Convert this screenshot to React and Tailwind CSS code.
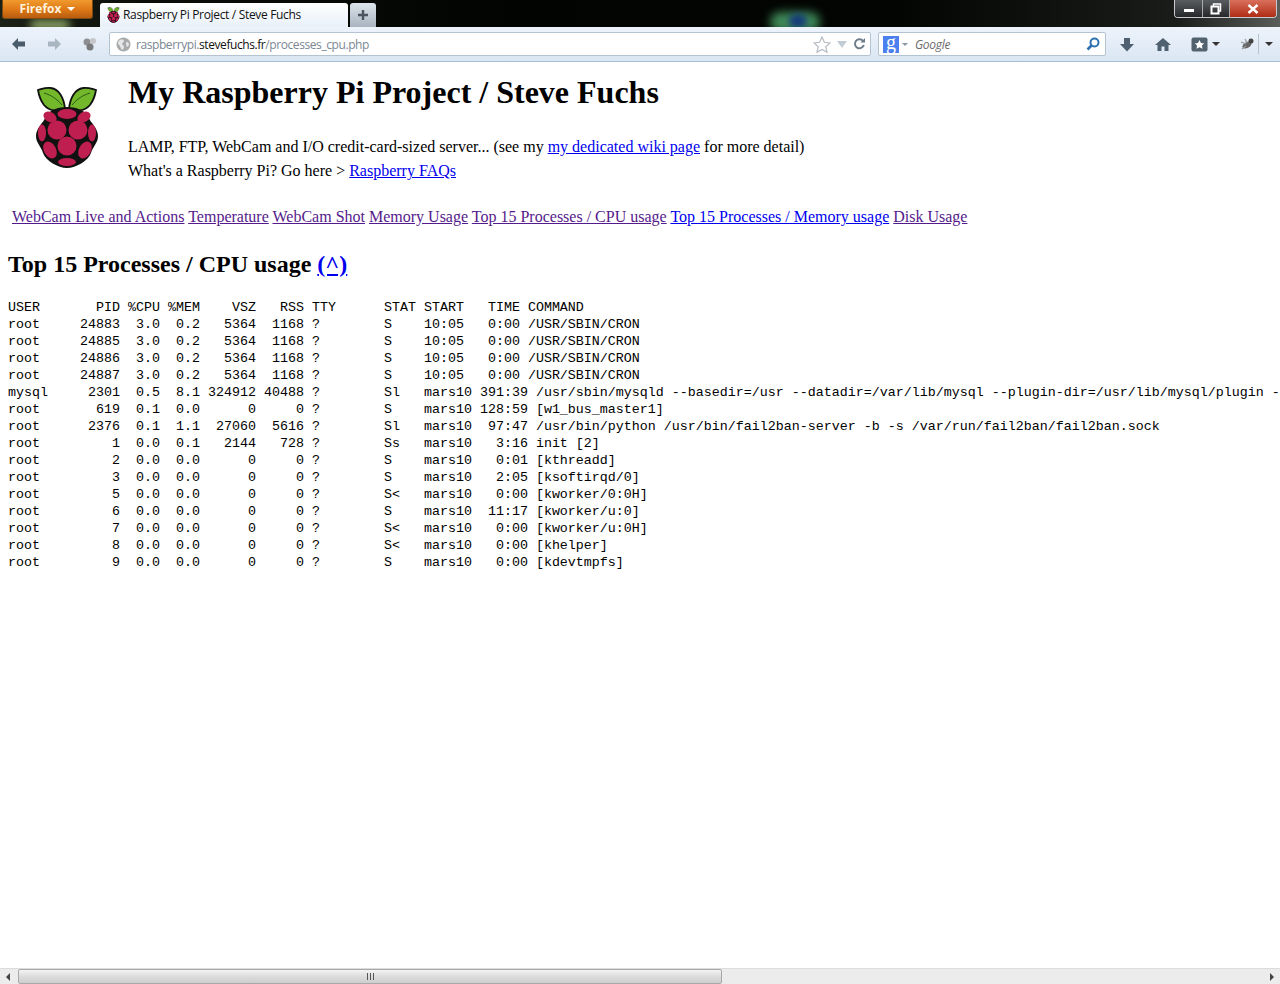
import React from 'react';

const uiFont = "font-['Open_Sans','Noto_Sans',sans-serif]";

const rows = [
  'USER       PID %CPU %MEM    VSZ   RSS TTY      STAT START   TIME COMMAND',
  'root     24883  3.0  0.2   5364  1168 ?        S    10:05   0:00 /USR/SBIN/CRON',
  'root     24885  3.0  0.2   5364  1168 ?        S    10:05   0:00 /USR/SBIN/CRON',
  'root     24886  3.0  0.2   5364  1168 ?        S    10:05   0:00 /USR/SBIN/CRON',
  'root     24887  3.0  0.2   5364  1168 ?        S    10:05   0:00 /USR/SBIN/CRON',
  'mysql     2301  0.5  8.1 324912 40488 ?        Sl   mars10 391:39 /usr/sbin/mysqld --basedir=/usr --datadir=/var/lib/mysql --plugin-dir=/usr/lib/mysql/plugin -',
  'root       619  0.1  0.0      0     0 ?        S    mars10 128:59 [w1_bus_master1]',
  'root      2376  0.1  1.1  27060  5616 ?        Sl   mars10  97:47 /usr/bin/python /usr/bin/fail2ban-server -b -s /var/run/fail2ban/fail2ban.sock',
  'root         1  0.0  0.1   2144   728 ?        Ss   mars10   3:16 init [2]',
  'root         2  0.0  0.0      0     0 ?        S    mars10   0:01 [kthreadd]',
  'root         3  0.0  0.0      0     0 ?        S    mars10   2:05 [ksoftirqd/0]',
  'root         5  0.0  0.0      0     0 ?        S<   mars10   0:00 [kworker/0:0H]',
  'root         6  0.0  0.0      0     0 ?        S    mars10  11:17 [kworker/u:0]',
  'root         7  0.0  0.0      0     0 ?        S<   mars10   0:00 [kworker/u:0H]',
  'root         8  0.0  0.0      0     0 ?        S<   mars10   0:00 [khelper]',
  'root         9  0.0  0.0      0     0 ?        S    mars10   0:00 [kdevtmpfs]',
];

const navLinks = [
  ['WebCam Live and Actions', true],
  ['Temperature', true],
  ['WebCam Shot', true],
  ['Memory Usage', true],
  ['Top 15 Processes / CPU usage', true],
  ['Top 15 Processes / Memory usage', false],
  ['Disk Usage', true],
];

const Raspberry = ({ className }) => (
  <svg viewBox="0 0 64 82" className={className}>
    <path d="M30 23C29 12 24 3 16 2 11 1 7 3 3 4c1 6 3 11 6 15 5 6 14 7 21 4z" fill="#72b82a" stroke="#111" strokeWidth="1.800" />
    <path d="M34 23C35 12 40 3 48 2c5-1 9 1 13 2-1 6-3 11-6 15-5 6-14 7-21 4z" fill="#72b82a" stroke="#111" strokeWidth="1.800" />
    <path d="M9 7c7 2 13 6 18 12M55 7c-7 2-13 6-18 12" stroke="#2a5a14" strokeWidth="1" fill="none" />
    <path d="M32 21c8 0 19 3 22 11 1 4 9 10 9 18 0 7-5 10-7 17-3 8-15 15-24 15S11 75 8 67c-2-7-7-10-7-17 0-8 8-14 9-18 3-8 14-11 22-11z" fill="#111" />
    <g fill="#bf1e50">
      <ellipse cx="32" cy="28" rx="9.500" ry="5" />
      <ellipse cx="15" cy="31" rx="7" ry="5" transform="rotate(30 15 31)" />
      <ellipse cx="49" cy="31" rx="7" ry="5" transform="rotate(-30 49 31)" />
      <circle cx="22" cy="44" r="9.500" />
      <circle cx="43" cy="44" r="9.500" />
      <ellipse cx="7" cy="47" rx="4" ry="8.500" />
      <ellipse cx="57" cy="47" rx="4" ry="8.500" />
      <circle cx="32" cy="60" r="9.500" />
      <ellipse cx="15" cy="64" rx="6" ry="9" transform="rotate(-30 15 64)" />
      <ellipse cx="50" cy="64" rx="6" ry="9" transform="rotate(30 50 64)" />
      <ellipse cx="32" cy="76" rx="9" ry="4" />
    </g>
  </svg>
);

const TitleBar = () => (
  <div className={`relative flex h-[27px] shrink-0 items-start overflow-hidden bg-[linear-gradient(90deg,#1c2118_0%,#0a0d08_12%,#020402_40%,#030503_70%,#1a1c1a_92%,#5a5d5a_100%)] ${uiFont}`}>
    <div className="absolute left-[770px] top-[12px] h-[20px] w-[50px] rounded-full bg-[#3f8a58] blur-[5px]" />
    <div className="absolute left-[789px] top-[14px] h-[14px] w-[18px] rounded-full bg-[#163d7a] blur-[3px]" />
    <div className="absolute left-[30px] top-[20px] h-[10px] w-[40px] rounded-full bg-[#8da867] blur-[4px]" />
    <div className="relative ml-[2px] flex h-[19px] w-[91px] items-center justify-center gap-[6px] rounded-b-[3px] border border-t-0 border-[#7a4a15] bg-[linear-gradient(180deg,#f09a2e_0%,#e07a17_50%,#b85c0f_100%)] text-[12px] font-bold text-[#fff3dc]">
      Firefox
      <span className="h-0 w-0 border-x-[4px] border-t-[4px] border-x-transparent border-t-white" />
    </div>
    <div className="relative ml-[7px] mt-[3px] flex h-[24px] w-[248px] items-center rounded-t-[3px] bg-[linear-gradient(180deg,#ffffff,#e8f0f8)] pl-[7px]">
      <Raspberry className="h-[16px] w-[13px]" />
      <span className="ml-[3px] text-[12px] tracking-[-0.33px] text-[#111]">Raspberry Pi Project / Steve Fuchs</span>
    </div>
    <div className="relative ml-[2px] mt-[3px] flex h-[24px] w-[26px] items-center justify-center rounded-t-[3px] bg-[linear-gradient(180deg,#dde4ec,#a9b4c0)]">
      <svg width="12" height="12" viewBox="0 0 12 12"><path d="M6 1v10M1 6h10" stroke="#4a5560" strokeWidth="2.400" /></svg>
    </div>
    <div className="relative ml-auto mr-[3px] flex h-[18px] w-[103px] overflow-hidden rounded-b-[4px] border border-t-0 border-[#c8ccd0]">
      <div className="flex w-[28px] items-center justify-center border-r border-[#aaa] bg-[linear-gradient(180deg,#5a5d60,#26282a)]">
        <span className="mt-[3px] h-[3px] w-[10px] bg-white" />
      </div>
      <div className="flex w-[27px] items-center justify-center border-r border-[#aaa] bg-[linear-gradient(180deg,#5a5d60,#26282a)]">
        <svg width="12" height="12" viewBox="0 0 12 12" fill="none" stroke="#fff"><path d="M3.500 3V1h7v7H8.500" strokeWidth="1.500" /><rect x="1.500" y="3.500" width="7" height="7" strokeWidth="2" /></svg>
      </div>
      <div className="flex flex-1 items-center justify-center bg-[linear-gradient(180deg,#d9705c,#b02c14)]">
        <svg width="12" height="10" viewBox="0 0 12 10"><path d="M1.500 1l9 8M10.500 1l-9 8" stroke="#fff" strokeWidth="2.400" /></svg>
      </div>
    </div>
  </div>
);

const Toolbar = () => (
  <div className={`flex h-[35px] shrink-0 items-center border-b border-[#a9bfd6] bg-[linear-gradient(180deg,#edf3fb,#dae6f3)] ${uiFont}`}>
    <svg className="ml-[11px]" width="15" height="14" viewBox="0 0 15 14"><path d="M7 1 1 7l6 6V9.500h7v-5H7z" fill="#4a5b6c" /></svg>
    <svg className="ml-[21px]" width="15" height="14" viewBox="0 0 15 14"><path d="M8 1l6 6-6 6V9.500H1v-5h7z" fill="#a9b5c1" /></svg>
    <svg className="ml-[20px]" width="15" height="14" viewBox="0 0 15 14">
      <circle cx="5" cy="5" r="3.500" fill="#8d8f91" /><circle cx="11" cy="4" r="3" fill="#c4c6c8" /><circle cx="8" cy="10" r="3.500" fill="#77797b" />
    </svg>
    <div className="ml-[12px] flex h-[24px] w-[762px] items-center rounded-[2px] border border-[#b4c3d2] bg-white pl-[6px] pr-[5px]">
      <svg width="15" height="15" viewBox="0 0 15 15"><circle cx="7.500" cy="7.500" r="7" fill="#a8aaac" /><path d="M4 3c2-1 4 0 4 1S6 6 6 7s2 1 2 3-2 3-2 3-2-3-2-4-2-1-2-3 2-3 2-3zM10 5c2 0 3 1 3 3l-2 2c-1-1-1-4-1-5z" fill="#e6e7e8" /></svg>
      <span className="ml-[5px] pt-[2px] text-[12px] tracking-[-0.42px] text-[#7b8794]">raspberrypi.<span className="text-[#111]">stevefuchs.fr</span>/processes_cpu.php</span>
      <svg className="ml-auto" width="18" height="17" viewBox="0 0 18 17"><path d="M9 1l2.400 5.300 5.600.6-4.200 3.800 1.200 5.600L9 13.500 4 16.300l1.200-5.600L1 6.900l5.600-.6z" fill="#fff" stroke="#b6bcc2" strokeWidth="1.200" /></svg>
      <span className="ml-[6px] h-0 w-0 border-x-[5px] border-t-[7px] border-x-transparent border-t-[#c3ccd4]" />
      <svg className="ml-[6px]" width="12" height="12" viewBox="0 0 12 12" fill="none"><path d="M10 3a4.500 4.500 0 1 0 .8 4" stroke="#6d7c8a" strokeWidth="2" /><path d="M7.500 4.500H12V0z" fill="#6d7c8a" /></svg>
    </div>
    <div className="ml-[7px] flex h-[24px] w-[228px] items-center rounded-[2px] border border-[#b4c3d2] bg-white pl-[4px] pr-[5px]">
      <span className="flex h-[17px] w-[16px] items-center justify-center bg-[#4b80ee] pb-[4px] font-['Liberation_Serif',serif] text-[20px] leading-none text-white">g</span>
      <span className="ml-[3px] h-0 w-0 border-x-[3px] border-t-[3px] border-x-transparent border-t-[#8a97a4]" />
      <span className="ml-[7px] pt-[2px] text-[12px] italic tracking-[-0.3px] text-[#6b6b6b]">Google</span>
      <svg className="ml-auto" width="14" height="14" viewBox="0 0 14 14" fill="none"><circle cx="8.500" cy="5.500" r="4" stroke="#2e70b0" strokeWidth="2" /><path d="M5.500 8.500 1.500 12.500" stroke="#2e70b0" strokeWidth="2.600" /></svg>
    </div>
    <svg className="ml-[14px]" width="14" height="15" viewBox="0 0 14 15"><path d="M4 1h6v6h4l-7 7.500L0 7h4z" fill="#4f6070" /></svg>
    <svg className="ml-[21px]" width="16" height="15" viewBox="0 0 16 15"><path d="M8 1 0 8h2.500v6h4V9.500h3V14h4V8H16z" fill="#4f6070" /></svg>
    <svg className="ml-[20px]" width="17" height="15" viewBox="0 0 17 15"><rect x="0.500" y="0.500" width="16" height="14" rx="2" fill="#52626f" /><path d="M8.500 3l1.500 3 3.200.4-2.300 2.200.6 3.200-3-1.500-3 1.500.6-3.200L3.800 6.400 7 6z" fill="#fff" /></svg>
    <span className="ml-[4px] h-0 w-0 border-x-[4px] border-t-[4px] border-x-transparent border-t-[#333]" />
    <svg className="ml-[19px]" width="16" height="14" viewBox="0 0 16 14"><ellipse cx="8" cy="8" rx="5" ry="3" transform="rotate(-30 8 8)" fill="#666" /><circle cx="12" cy="4" r="2.500" fill="#444" /><path d="M2 5l5 2M3 12l4-3M6 2l2 4" stroke="#999" strokeWidth="1.200" /></svg>
    <span className="ml-[3px] h-[20px] w-px bg-[#b4c3d2]" />
    <span className="ml-[6px] h-0 w-0 border-x-[4px] border-t-[4px] border-x-transparent border-t-[#333]" />
  </div>
);

const Scrollbar = () => (
  <div className="flex h-[16px] shrink-0 items-center border-t border-[#dcdcdc] bg-[#ececec]">
    <span className="ml-[6px] h-0 w-0 border-y-[4px] border-r-[4px] border-y-transparent border-r-[#444]" />
    <div className="ml-[8px] flex h-[15px] w-[704px] items-center justify-center gap-[2px] rounded-[2px] border border-[#a8a8a8] bg-[linear-gradient(180deg,#f4f4f4,#dcdcdc_50%,#cecece)]">
      <span className="h-[7px] w-px bg-[#555]" />
      <span className="h-[7px] w-px bg-[#555]" />
      <span className="h-[7px] w-px bg-[#555]" />
    </div>
    <span className="ml-auto mr-[6px] h-0 w-0 border-y-[4px] border-l-[4px] border-y-transparent border-l-[#444]" />
  </div>
);

export default function App() {
  return (
    <div className="flex h-screen flex-col overflow-hidden bg-white font-['Liberation_Serif',serif] text-[16px] text-black">
      <TitleBar />
      <Toolbar />
      <div className="min-h-0 flex-1 overflow-hidden pl-[8px]">
        <div className="flex">
          <Raspberry className="ml-[27px] mt-[24px] h-[82px] w-[64px] shrink-0" />
          <div className="ml-[29px]">
            <h1 className="mt-[12px] text-[32px] font-bold leading-[37px]">My Raspberry Pi Project / Steve Fuchs</h1>
            <p className="mt-[24px] leading-[24px]">
              LAMP, FTP, WebCam and I/O credit-card-sized server... (see my <a className="text-[#0000ee] underline">my dedicated wiki page</a> for more detail)
            </p>
            <p className="leading-[24px]">
              What's a Raspberry Pi? Go here &gt; <a className="text-[#0000ee] underline">Raspberry FAQs</a>
            </p>
          </div>
        </div>
        <div className="ml-[4px] mt-[25px] leading-[18px]">
          {navLinks.map(([label, visited]) => (
            <React.Fragment key={label}>
              <a className={visited ? 'text-[#551a8b] underline' : 'text-[#0000ee] underline'}>{label}</a>{' '}
            </React.Fragment>
          ))}
        </div>
        <h2 className="mt-[24px] text-[24px] font-bold leading-[28px]">
          Top 15 Processes / CPU usage <a className="text-[#0000ee] underline">(^)</a>
        </h2>
        <pre className="mt-[21px] font-['Liberation_Mono',monospace] text-[13.33px] leading-[17px]">{rows.join('\n')}</pre>
      </div>
      <Scrollbar />
    </div>
  );
}
